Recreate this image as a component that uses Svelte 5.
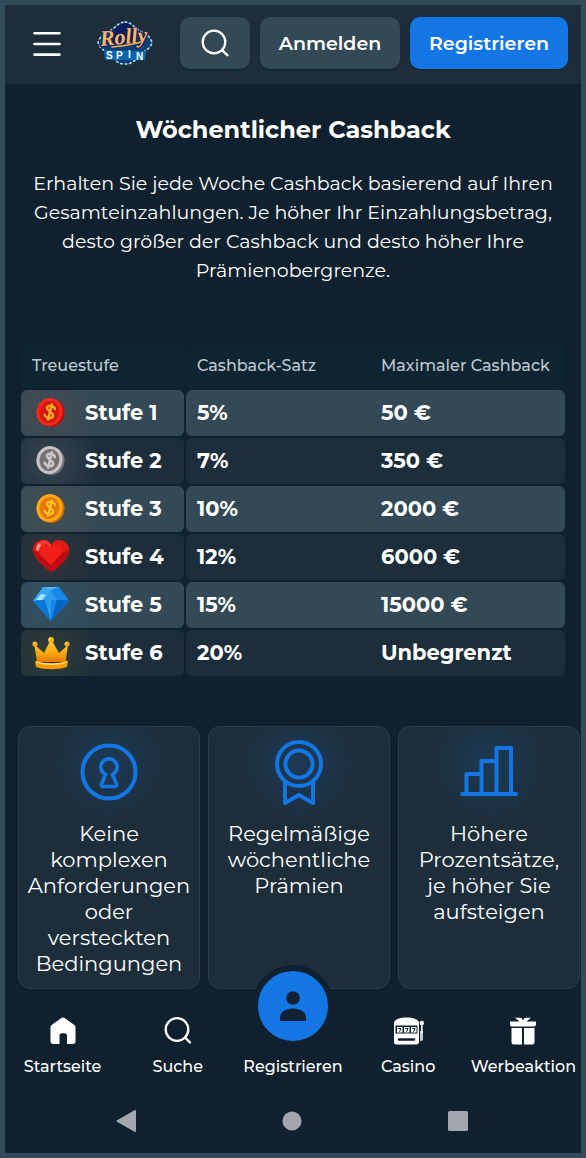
<script>
  const levels = [
    { icon: 'coin', tone: 'red', name: 'Stufe 1', rate: '5%', max: '50 €' },
    { icon: 'coin', tone: 'silver', name: 'Stufe 2', rate: '7%', max: '350 €' },
    { icon: 'coin', tone: 'gold', name: 'Stufe 3', rate: '10%', max: '2000 €' },
    { icon: 'heart', tone: 'heart', name: 'Stufe 4', rate: '12%', max: '6000 €' },
    { icon: 'diamond', tone: 'diamond', name: 'Stufe 5', rate: '15%', max: '15000 €' },
    { icon: 'crown', tone: 'crown', name: 'Stufe 6', rate: '20%', max: 'Unbegrenzt' }
  ];

  const coins = {
    red: { edge: '#b80d08', rim: '#f5281c', face: '#d91a10', sign: '#ffa51f' },
    silver: { edge: '#77727a', rim: '#c9c4c8', face: '#77706f', sign: '#cbc5c3' },
    gold: { edge: '#d56b00', rim: '#ffa917', face: '#e97a08', sign: '#ffc02a' }
  };

  const features = [
    { icon: 'lock', text: 'Keine komplexen Anforderungen oder versteckten Bedingungen' },
    { icon: 'medal', text: 'Regelmäßige wöchentliche Prämien' },
    { icon: 'bars', text: 'Höhere Prozentsätze, je höher Sie aufsteigen' }
  ];
</script>

<div class="page">
  <header>
    <button class="menu" aria-label="Menü">
      <svg width="28" height="26" viewBox="0 0 28 26" fill="none" stroke="#fff" stroke-width="2.6" stroke-linecap="round">
        <path d="M1.5 2.3h25M1.5 13h25M1.5 23.6h25" />
      </svg>
    </button>
    <a class="logo" href="#top" aria-label="Rolly Spin">
      <svg width="58" height="46" viewBox="0 0 58 46">
        <path d="M29 2c6 0 9 5 14 8 4 3 9 4 12 10 2 3 0 6-3 9-3 2-6 4-8 7l-6 5c-4 3-6 3-9 3s-5 0-9-3l-6-5c-2-3-5-5-8-7-3-3-5-6-3-9 3-6 8-7 12-10 5-3 8-8 14-8z" fill="#0b3f74" />
        <path d="M29 3c5 0 8 4 11 7l2 14H16l2-14c3-3 6-7 11-7z" fill="#101b5b" />
        <path d="M29 2c6 0 9 5 14 8 4 3 9 4 12 10 2 3 0 6-3 9-3 2-6 4-8 7l-6 5c-4 3-6 3-9 3s-5 0-9-3l-6-5c-2-3-5-5-8-7-3-3-5-6-3-9 3-6 8-7 12-10 5-3 8-8 14-8z" fill="none" stroke="#a9dcf2" stroke-width="1.6" stroke-linecap="round" stroke-dasharray="1.6 3" />
        <path d="M8 30l42 1-1 9H9z" fill="#0869ae" />
        <text class="script" x="4" y="24" transform="rotate(-5 28 20)">Rolly</text>
        <path d="M16 27c9-1 20-2 29-5" fill="none" stroke="#f8a94c" stroke-width="1.7" stroke-linecap="round" />
        <text class="spin" x="10" y="39">S</text>
        <text class="spin" x="20" y="39">P</text>
        <text class="spin" x="32" y="38">I</text>
        <text class="spin" x="40" y="40">N</text>
      </svg>
    </a>
    <button class="square" aria-label="Suche">
      <svg width="28" height="28" viewBox="0 0 28 28" fill="none" stroke="#fff" stroke-width="2.3" stroke-linecap="round">
        <circle cx="13" cy="13" r="11.3" /><path d="m21.3 21.3 5.2 5" />
      </svg>
    </button>
    <button class="login">Anmelden</button>
    <button class="signup">Registrieren</button>
  </header>

  <main id="top">
    <section class="intro">
      <h1>Wöchentlicher Cashback</h1>
      <p>Erhalten Sie jede Woche Cashback basierend auf Ihren Gesamteinzahlungen. Je höher Ihr Einzahlungsbetrag, desto größer der Cashback und desto höher Ihre Prämienobergrenze.</p>
    </section>

    <table>
      <thead>
        <tr><th scope="col">Treuestufe</th><th scope="col">Cashback-Satz</th><th scope="col">Maximaler Cashback</th></tr>
      </thead>
      <tbody>
        {#each levels as level}
          <tr>
            <th scope="row" class={level.tone}>
              <svg class="badge" width="38" height="38" viewBox="0 0 38 38" aria-hidden="true">
                {#if level.icon === 'coin'}
                  {@const c = coins[level.tone]}
                  <ellipse cx="19.500" cy="20" rx="13" ry="14" fill={c.edge} transform="rotate(15 19.500 20)" />
                  <ellipse cx="17.500" cy="19" rx="13" ry="14" fill={c.rim} transform="rotate(15 17.500 19)" />
                  <ellipse cx="17.500" cy="19" rx="10" ry="11" fill={c.face} transform="rotate(15 17.500 19)" />
                  <g fill="none" stroke-linecap="round" transform="rotate(14 18 19)">
                    <path d="M22 15c-1-3-7-3-8 0s8 4 8 7c0 4-7 4-8.500 1M18 11v16" stroke={c.edge} stroke-width="4.600" />
                    <path d="M22 15c-1-3-7-3-8 0s8 4 8 7c0 4-7 4-8.500 1M18 11v16" stroke={c.sign} stroke-width="2.600" />
                  </g>
                {:else if level.icon === 'heart'}
                  <path d="M19 35C14 31 2 23 1 13 1 5 7 3 12 3c4 0 6 3 7 5 2-3 4-5 8-5 6 0 10 4 10 10 0 9-11 18-18 22z" fill="#df1813" />
                  <path d="M19 35C14 31 2 23 1 13l6 3 12 12 11-12 7-3c0 9-11 18-18 22z" fill="#bd0d12" />
                  <path d="M19 28 7 16l2-8 6-1 4 5 4-5 6 1 1 8z" fill="#ee2019" />
                  <path d="M4 13c0-6 4-8 7-8-1 4-4 4-4 9z" fill="#ff9a8e" />
                  <path d="M12 3c4 0 6 3 7 5v4l-4-5-6 1c-3-1-1-4 3-5z" fill="#f2392e" />
                {:else if level.icon === 'diamond'}
                  <path d="M11 2h16l10 14-18 20L1 16z" fill="#1386e8" />
                  <path d="M11 2h16l-8 3z" fill="#58b9f2" />
                  <path d="M1 16 11 2l8 3-6 10z" fill="#38a9f0" />
                  <path d="m19 5 6 10H13z" fill="#2f9bec" />
                  <path d="m19 5 8-3 10 14-12-1z" fill="#178ae9" />
                  <path d="m1 16 12-1h6v21z" fill="#0a78d6" />
                  <path d="M13 15h6v21z" fill="#2e9aea" />
                  <path d="M25 15h12L19 36z" fill="#0562c0" />
                  <path d="m4 15 5-6 5 1-4 5z" fill="#a8e8ff" />
                {:else}
                  <defs>
                    <linearGradient id="crown-gold" x1="0" y1="0" x2="0" y2="1">
                      <stop offset="0" stop-color="#ffd23e" /><stop offset=".55" stop-color="#ffae10" /><stop offset="1" stop-color="#e77800" />
                    </linearGradient>
                  </defs>
                  <path d="M5 29C4 22 3 16 2 11l10 9 7-14 8 14 9-8c-1 7-2 12-2 17z" fill="url(#crown-gold)" />
                  <path d="M3 28c9 3 23 3 33 0l-1 6c-9 3-22 3-31 0z" fill="#f79a08" />
                  <path d="M4 29c9 3 22 3 31 0" fill="none" stroke="#ffdc54" stroke-width="1.500" />
                  <circle cx="19" cy="7" r="3" fill="#ffb51f" /><circle cx="3" cy="11" r="2.600" fill="#ff9e1b" /><circle cx="35" cy="11" r="2.600" fill="#ffa51f" />
                  <circle cx="18" cy="6" r="1" fill="#fff1a0" /><circle cx="2.500" cy="10" r="1" fill="#ffe0a0" /><circle cx="34.500" cy="10" r="1" fill="#ffe0a0" />
                {/if}
              </svg>
              <span>{level.name}</span>
            </th>
            <td>{level.rate}</td>
            <td>{level.max}</td>
          </tr>
        {/each}
      </tbody>
    </table>

    <section class="features">
      {#each features as feature}
        <article>
          <svg width="66" height="66" viewBox="0 0 66 66" fill="none" stroke="#1476e4" stroke-width="4" stroke-linecap="round" stroke-linejoin="round" aria-hidden="true">
            {#if feature.icon === 'lock'}
              <circle cx="33" cy="33" r="26.500" />
              <path d="M29.500 35.500a8.200 8.200 0 1 1 7 0l4 9.500c.5 1.500-.3 2.500-1.500 2.500H27c-1.200 0-2-1-1.500-2.500z" stroke-width="3.600" />
            {:else if feature.icon === 'medal'}
              <circle cx="33" cy="25" r="22" /><circle cx="33" cy="25" r="13.500" />
              <path d="M19 43v21l14-8 14 8V43" />
            {:else}
              <path d="M6 55h54M10.500 54V35h15M25.500 54V22h15M40.500 54V9H55v45" />
            {/if}
          </svg>
          <p>{feature.text}</p>
        </article>
      {/each}
    </section>
  </main>

  <nav class="tabs">
    <a href="#start">
      <svg width="28" height="28" viewBox="0 0 28 28" fill="#fff">
        <path d="M12 1.200a3.500 3.500 0 0 1 4 0l9 6.600c1 .8 1.500 1.700 1.500 3V24a3 3 0 0 1-3 3H18v-8c0-1.800-.8-2.800-2.500-2.800h-2.500c-1.800 0-2.500 1-2.500 2.800v8H4.500a3 3 0 0 1-3-3V10.800c0-1.300.5-2.200 1.500-3z" />
      </svg>
      <span>Startseite</span>
    </a>
    <a href="#suche">
      <svg width="28" height="28" viewBox="0 0 28 28" fill="none" stroke="#fff" stroke-width="2.300" stroke-linecap="round">
        <circle cx="13" cy="12.500" r="11.300" /><path d="m21 20.500 5 5" />
      </svg>
      <span>Suche</span>
    </a>
    <a href="#registrieren">
      <i class="bubble">
        <svg width="28" height="32" viewBox="0 0 28 32" fill="#0f2233">
          <circle cx="14" cy="8" r="6.800" /><path d="M1 31v-3c0-6 5.500-9.500 13-9.500S27 22 27 28v3z" />
        </svg>
      </i>
      <span>Registrieren</span>
    </a>
    <a href="#casino">
      <svg width="32" height="28" viewBox="0 0 32 28" fill="#fff">
        <path d="M2 6c0-3.500 6-5.500 12.500-5.500S27 2.500 27 6v18.500a3 3 0 0 1-3 3H4.500a2.500 2.500 0 0 1-2.500-2.500z" />
        <path d="M3.500 8.500h22v8h-22z" fill="#0f2130" />
        <path d="M5 10h5.500v5.500H5zM12 10h5.500v5.500H12zM19 10h5.500v5.500H19z" />
        <path d="M6 11.400h3l-1.500 3.400M13 11.400h3l-1.500 3.400M20 11.400h3l-1.500 3.400" fill="none" stroke="#0f2130" stroke-width="1" />
        <path d="M7 22.500h15" stroke="#0f2130" stroke-width="2.400" stroke-linecap="round" />
        <path d="M28 14h3v8a2 2 0 0 1-2 2h-1z" fill="#c4ccd2" /><path d="M29 7h1.600v9H29z" /><circle cx="29.800" cy="6" r="2.200" />
      </svg>
      <span>Casino</span>
    </a>
    <a href="#werbeaktion">
      <svg width="28" height="28" viewBox="0 0 28 28" fill="#fff">
        <path d="M1 4.500h9.500L6 .7h5c1.800 0 2.300 1.300 3 2.800.7-1.500 1.200-2.800 3-2.800h5l-4.500 3.800H27v2.700C27 9 26 9.500 24.500 9.500h-21C2 9.500 1 9 1 7.200z" />
        <path d="M2.500 11H13v16.500H5a2.500 2.500 0 0 1-2.500-2.500zM15 11h10.500v14a2.500 2.500 0 0 1-2.500 2.500h-8z" />
      </svg>
      <span>Werbeaktion</span>
    </a>
  </nav>

  <div class="system">
    <button aria-label="Zurück"><svg width="20" height="24" viewBox="0 0 20 24"><path d="M19 2v20L1.500 12z" fill="#a3a6ad" stroke="#a3a6ad" stroke-width="2" stroke-linejoin="round" /></svg></button>
    <button aria-label="Startbildschirm"><svg width="20" height="20" viewBox="0 0 20 20"><circle cx="10" cy="10" r="9.500" fill="#a3a6ad" /></svg></button>
    <button aria-label="Übersicht"><svg width="20" height="20" viewBox="0 0 20 20"><rect width="20" height="20" rx="1.500" fill="#a3a6ad" /></svg></button>
  </div>
</div>

<style>
  :global(body) { margin: 0; background: #0f212e; }
  * { box-sizing: border-box; }
  .page {
    min-height: 100vh;
    border: 5px solid #334a59;
    background: #0f212e;
    color: #fff;
    font-family: Montserrat, Inter, "Open Sans", sans-serif;
    font-weight: 500;
    overflow: hidden;
    display: flex;
    flex-direction: column;
  }
  button { border: 0; padding: 0; font: inherit; color: inherit; background: none; }
  svg { display: block; flex: none; }
  header {
    display: flex;
    align-items: center;
    gap: 10px;
    padding: 12px 13px 15px 28px;
    background: #1d2e3b;
  }
  .menu { padding-top: 2px; }
  .logo { margin: 0 auto 0 25px; }
  .script { font: italic bold 22px "Liberation Serif", serif; fill: #fbb765; stroke: #101b5b; stroke-width: 2px; paint-order: stroke; }
  .spin { font: bold 10px "Liberation Sans", sans-serif; fill: #fff; }
  .square, .login, .signup {
    height: 52px;
    border-radius: 10px;
    background: #334956;
    box-shadow: 0 1px 2px #13222e;
    display: grid;
    place-items: center;
    font-size: 19px;
    font-weight: 600;
  }
  .square { width: 70px; }
  .login { width: 140px; }
  .signup { width: 158px; background: #1476e4; }
  .intro { padding: 30px 24px 0; text-align: center; }
  h1 { margin: 0; font-size: 24px; line-height: 32px; font-weight: 700; }
  .intro p { margin: 23px 0 0; font-size: 19px; line-height: 29px; font-weight: 400; }
  table { display: block; margin: 59px 16px 0; }
  thead, tbody { display: grid; gap: 2px; }
  thead { margin-bottom: 2px; }
  tr { display: grid; grid-template-columns: 165fr 184fr 195fr; }
  th, td {
    display: flex;
    align-items: center;
    height: 46px;
    padding: 0 11px 2px;
    font-size: 21px;
    font-weight: 700;
    background: #1d2e3b;
    white-space: nowrap;
  }
  thead th { height: 44px; font-size: 16px; font-weight: 500; color: #bdc9d3; background: #0f2431; }
  tr > :first-child { margin-right: 2px; border-radius: 6px; }
  tr > :nth-child(2) { border-radius: 6px 0 0 6px; }
  tr > :last-child { border-radius: 0 6px 6px 0; }
  tbody tr:nth-child(odd) > * { background-color: #334956; }
  tbody th { gap: 15px; --glow: #b0a0a040; }
  tbody tr > th { background-image: radial-gradient(circle at 29px 50%, var(--glow), transparent 50px); }
  tbody .red, tbody .heart { --glow: #90504030; }
  tbody .silver { --glow: #aaaaaa30; }
  tbody .gold { --glow: #90704030; }
  tbody .diamond { --glow: #2070a030; }
  tbody .crown { --glow: #80802030; }
  .features {
    display: grid;
    grid-template-columns: repeat(3, minmax(0, 1fr));
    gap: 8px;
    padding: 50px 1px 0 13px;
  }
  article {
    min-height: 263px;
    padding: 12px 8px 11px;
    border: 1px solid #293c4a;
    border-radius: 12px;
    background: radial-gradient(circle at 50% 36px, #1756924d, transparent 58px), #1d2e3b;
    display: flex;
    flex-direction: column;
    align-items: center;
    text-align: center;
  }
  article p { margin: 16px 0 0; font-size: 21px; line-height: 26px; font-weight: 400; }
  .tabs { display: grid; grid-template-columns: repeat(5, minmax(0, 1fr)); padding-top: 28px; }
  .tabs a {
    display: flex;
    flex-direction: column;
    align-items: center;
    justify-content: flex-end;
    gap: 12px;
    color: #fff;
    text-decoration: none;
    font-size: 16px;
    line-height: 20px;
  }
  .bubble {
    width: 82px;
    height: 82px;
    margin: -60px 0 -2px;
    border: 6px solid #0f212e;
    border-radius: 50%;
    background: #1476e4;
    display: grid;
    place-items: center;
  }
  .system { display: flex; justify-content: space-between; align-items: center; padding: 32px 113px 20px 111px; }
</style>
